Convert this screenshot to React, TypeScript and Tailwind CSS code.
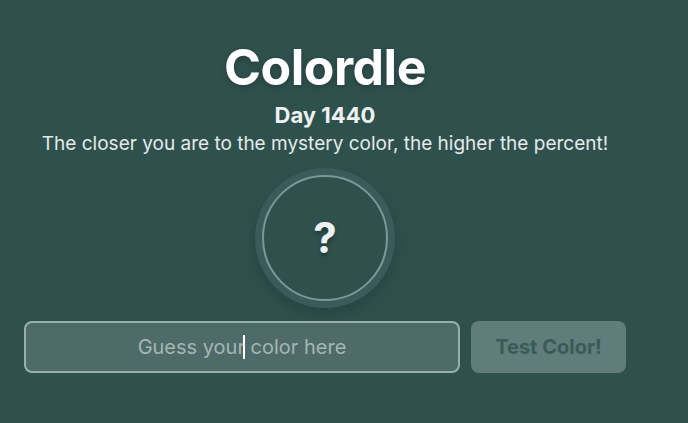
import React from 'react';

const App = () => {
  return (
    <div className="min-h-[423px] w-full bg-[#2f514e] font-['Inter',_'Liberation_Sans',_sans-serif] overflow-hidden">
      <div className="w-[650px] flex flex-col items-center pt-[38px]">
        {/* Header */}
        <h1 className="text-[50px] leading-[58px] font-bold text-white tracking-[-0.01em] [text-shadow:0_2px_6px_rgba(0,0,0,0.25)]">
          Colordle
        </h1>
        <div className="text-[22px] leading-[28px] font-bold text-[#eef2f1] mt-[5px]">Day 1440</div>
        <p className="text-[19px] leading-[24px] text-[#e4eae9] mt-[3px]">
          The closer you are to the mystery color, the higher the percent!
        </p>

        {/* Mystery color */}
        <div className="mt-[12px] w-[140px] h-[140px] rounded-full bg-[#3a5b59] flex items-center justify-center shadow-[0_6px_16px_rgba(0,0,0,0.18)]">
          <div className="w-[126px] h-[126px] rounded-full border-2 border-[#7a9895] bg-[#2f514e] flex items-center justify-center">
            <span className="text-[42px] font-bold text-[#eef1f1] leading-none [text-shadow:0_3px_4px_rgba(0,0,0,0.35)]">?</span>
          </div>
        </div>

        {/* Guess row */}
        <div className="mt-[13px] w-full flex items-center gap-[11px] px-[24px]">
          <div className="relative w-[436px] h-[52px] rounded-[8px] border-2 border-[#98b0ad] bg-[#4f6b69] flex items-center justify-center">
            <span className="text-[20px] text-[#a3b6b4]">Guess your color here</span>
            <span className="absolute left-[217px] top-[12px] w-[2px] h-[24px] bg-white" />
          </div>
          <button className="w-[155px] h-[52px] rounded-[8px] bg-[#607d7b] text-[20px] font-bold text-[#3a5a57]">
            Test Color!
          </button>
        </div>
      </div>
    </div>
  );
};

export default App;
